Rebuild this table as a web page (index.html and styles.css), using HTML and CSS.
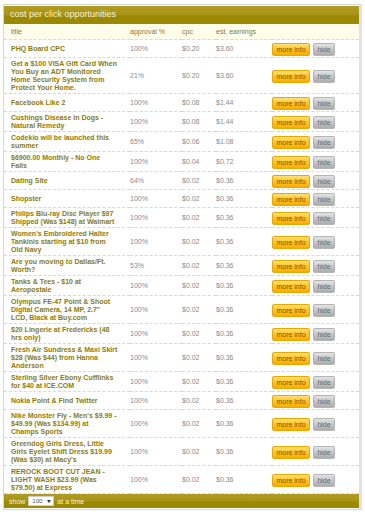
FILE: index.html
```html
<!DOCTYPE html>
<html>
<head>
<meta charset="utf-8">
<link rel="stylesheet" href="styles.css">
</head>
<body>
<div class="panel">
  <div class="head">cost per click opportunities</div>
  <table class="grid">
    <colgroup>
      <col class="c-title"><col class="c-appr"><col class="c-cpc"><col class="c-earn"><col class="c-act">
    </colgroup>
    <thead>
      <tr><th>title</th><th>approval %</th><th>cpc</th><th>est. earnings</th><th></th></tr>
    </thead>
    <tbody>
      <tr><td class="t">PHQ Board CPC</td><td>100%</td><td>$0.20</td><td>$3.60</td><td class="a"><div class="btns"><span class="more">more info</span><span class="hide">hide</span></div></td></tr>
      <tr><td class="t">Get a $100 VISA Gift Card When You Buy an ADT Monitored Home Security System from Protect Your Home.</td><td>21%</td><td>$0.20</td><td>$3.60</td><td class="a"><div class="btns"><span class="more">more info</span><span class="hide">hide</span></div></td></tr>
      <tr><td class="t">Facebook Like 2</td><td>100%</td><td>$0.08</td><td>$1.44</td><td class="a"><div class="btns"><span class="more">more info</span><span class="hide">hide</span></div></td></tr>
      <tr><td class="t">Cushings Disease in Dogs - Natural Remedy</td><td>100%</td><td>$0.08</td><td>$1.44</td><td class="a"><div class="btns"><span class="more">more info</span><span class="hide">hide</span></div></td></tr>
      <tr><td class="t">Codekio will be launched this summer</td><td>65%</td><td>$0.06</td><td>$1.08</td><td class="a"><div class="btns"><span class="more">more info</span><span class="hide">hide</span></div></td></tr>
      <tr><td class="t">$6900.00 Monthly - No One Fails</td><td>100%</td><td>$0.04</td><td>$0.72</td><td class="a"><div class="btns"><span class="more">more info</span><span class="hide">hide</span></div></td></tr>
      <tr><td class="t">Dating Site</td><td>64%</td><td>$0.02</td><td>$0.36</td><td class="a"><div class="btns"><span class="more">more info</span><span class="hide">hide</span></div></td></tr>
      <tr><td class="t">Shopster</td><td>100%</td><td>$0.02</td><td>$0.36</td><td class="a"><div class="btns"><span class="more">more info</span><span class="hide">hide</span></div></td></tr>
      <tr><td class="t">Philips Blu-ray Disc Player $97 Shipped (Was $148) at Walmart</td><td>100%</td><td>$0.02</td><td>$0.36</td><td class="a"><div class="btns"><span class="more">more info</span><span class="hide">hide</span></div></td></tr>
      <tr><td class="t">Women's Embroidered Halter Tankinis starting at $10 from Old Navy</td><td>100%</td><td>$0.02</td><td>$0.36</td><td class="a"><div class="btns"><span class="more">more info</span><span class="hide">hide</span></div></td></tr>
      <tr><td class="t">Are you moving to Dallas/Ft. Worth?</td><td>53%</td><td>$0.02</td><td>$0.36</td><td class="a"><div class="btns"><span class="more">more info</span><span class="hide">hide</span></div></td></tr>
      <tr><td class="t">Tanks &amp; Tees - $10 at Aeropostale</td><td>100%</td><td>$0.02</td><td>$0.36</td><td class="a"><div class="btns"><span class="more">more info</span><span class="hide">hide</span></div></td></tr>
      <tr><td class="t">Olympus FE-47 Point &amp; Shoot Digital Camera, 14 MP, 2.7" LCD, Black at Buy.com</td><td>100%</td><td>$0.02</td><td>$0.36</td><td class="a"><div class="btns"><span class="more">more info</span><span class="hide">hide</span></div></td></tr>
      <tr><td class="t">$20 Lingerie at Fredericks (48 hrs only)</td><td>100%</td><td>$0.02</td><td>$0.36</td><td class="a"><div class="btns"><span class="more">more info</span><span class="hide">hide</span></div></td></tr>
      <tr><td class="t">Fresh Air Sundress &amp; Maxi Skirt $28 (Was $44) from Hanna Anderson</td><td>100%</td><td>$0.02</td><td>$0.36</td><td class="a"><div class="btns"><span class="more">more info</span><span class="hide">hide</span></div></td></tr>
      <tr><td class="t">Sterling Silver Ebony Cufflinks for $40 at ICE.COM</td><td>100%</td><td>$0.02</td><td>$0.36</td><td class="a"><div class="btns"><span class="more">more info</span><span class="hide">hide</span></div></td></tr>
      <tr><td class="t">Nokia Point &amp; Find Twitter</td><td>100%</td><td>$0.02</td><td>$0.36</td><td class="a"><div class="btns"><span class="more">more info</span><span class="hide">hide</span></div></td></tr>
      <tr><td class="t">Nike Monster Fly - Men's $9.99 - $49.99 (Was $134.99) at Champs Sports</td><td>100%</td><td>$0.02</td><td>$0.36</td><td class="a"><div class="btns"><span class="more">more info</span><span class="hide">hide</span></div></td></tr>
      <tr><td class="t">Greendog Girls Dress, Little Girls Eyelet Shift Dress $19.99 (Was $30) at Macy's</td><td>100%</td><td>$0.02</td><td>$0.36</td><td class="a"><div class="btns"><span class="more">more info</span><span class="hide">hide</span></div></td></tr>
      <tr><td class="t">REROCK BOOT CUT JEAN - LIGHT WASH $23.99 (Was $79.50) at Express</td><td>100%</td><td>$0.02</td><td>$0.36</td><td class="a"><div class="btns"><span class="more">more info</span><span class="hide">hide</span></div></td></tr>
    </tbody>
  </table>
  <div class="foot">
    <span>show</span>
    <span class="sel"><span>100</span><span class="arrow"></span></span>
    <span>at a time</span>
  </div>
</div>
</body>
</html>
```

FILE: styles.css
```css
html, body {
  margin: 0;
  padding: 0;
  background: #ffffff;
}
body {
  font-family: "Liberation Sans", Arial, sans-serif;
  padding: 4px 3px 0 3px;
}
.panel {
  border: 1px solid #d6d6d6;
  border-right: 3px solid #e2e2e2;
  background: #fff;
  padding: 1px 0 1px 0;
}
.head {
  height: 18px;
  line-height: 17px;
  padding-left: 6px;
  font-size: 9px;
  color: #f6f1d6;
  background: linear-gradient(#b09c20 0%, #a89418 50%, #9b8a00 55%, #9a8800 100%);
}
.grid {
  width: 100%;
  border-collapse: collapse;
  table-layout: fixed;
  font-size: 7px;
}
.c-title { width: 126px; }
.c-appr { width: 52px; }
.c-cpc { width: 34px; }
.c-earn { width: 56px; }
.grid th {
  background: #fefdea;
  color: #857a3c;
  font-weight: normal;
  text-align: left;
  height: 15px;
  padding: 0;
  border-bottom: 1px dashed #d8d8d8;
}
.grid th:first-child { padding-left: 7px; }
.grid td {
  color: #8a8a8a;
  padding: 2px 0 1px 0;
  line-height: 8px;
  border-bottom: 1px dashed #d8d8d8;
  vertical-align: middle;
}
.grid td.t {
  padding-left: 7px;
  padding-right: 12.4px;
  color: #8b7c0c;
  font-weight: bold;
}
.btns {
  display: flex;
  align-items: center;
  gap: 3px;
  min-height: 14px;
}
.more, .hide {
  display: block;
  height: 11px;
  line-height: 11px;
  border-radius: 2px;
  font-size: 7px;
  text-align: center;
}
.more {
  width: 36px;
  border: 1px solid #eaa800;
  background: linear-gradient(#ffe07a 0%, #ffc52a 45%, #f7ad00 100%);
  color: #705c00;
}
.hide {
  width: 20px;
  border: 1px solid #b4b4b4;
  background: linear-gradient(#e4e4e4 0%, #c4c4c4 50%, #acacac 100%);
  color: #6a6a6a;
}
.foot {
  height: 14px;
  display: flex;
  align-items: center;
  gap: 3px;
  padding-left: 5px;
  font-size: 7px;
  color: #f8f4de;
  background: linear-gradient(#b09c20 0%, #a89418 50%, #9b8a00 55%, #9a8800 100%);
}
.sel {
  display: inline-flex;
  align-items: center;
  justify-content: space-between;
  width: 26px;
  height: 10px;
  background: #fff;
  border: 1px solid #ccc;
  color: #555;
  font-size: 6px;
  padding-left: 3px;
  box-sizing: border-box;
}
.arrow {
  width: 0;
  height: 0;
  border-left: 2.5px solid transparent;
  border-right: 2.5px solid transparent;
  border-top: 3px solid #333;
  margin-right: 2px;
}
```
